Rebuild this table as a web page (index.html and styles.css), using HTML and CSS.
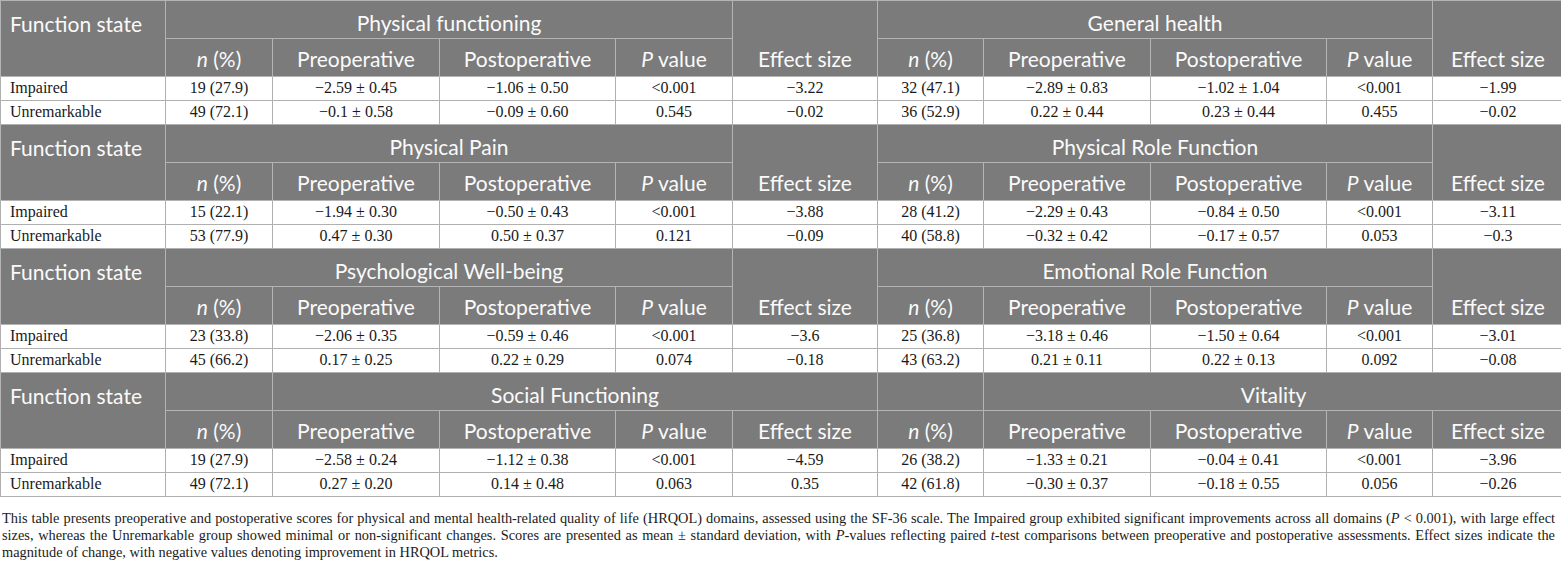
FILE: index.html
```html
<!DOCTYPE html>
<html lang="en">
<head>
    <meta charset="UTF-8">
    <title>HRQOL scores by function state</title>
    <link rel="stylesheet" href="styles.css">
</head>
<body>
    <table class="results">
        <colgroup>
            <col class="c-state">
            <col class="c-n">
            <col class="c-pre">
            <col class="c-post">
            <col class="c-p">
            <col class="c-eff">
            <col class="c-n2">
            <col class="c-pre">
            <col class="c-post">
            <col class="c-p2">
            <col class="c-eff2">
        </colgroup>
        <tbody>
            <!-- physical functioning / general health -->
            <tr class="h1">
                <th rowspan="2" class="state">Function state</th>
                <th colspan="4">Physical functioning</th>
                <th rowspan="2" class="eff">Effect size</th>
                <th colspan="4">General health</th>
                <th rowspan="2" class="eff">Effect size</th>
            </tr>
            <tr class="h2">
                <th><i>n</i> (%)</th><th>Preoperative</th><th>Postoperative</th><th><i>P</i> value</th>
                <th><i>n</i> (%)</th><th>Preoperative</th><th>Postoperative</th><th><i>P</i> value</th>
            </tr>
            <tr>
                <td class="name">Impaired</td><td>19 (27.9)</td><td>−2.59 ± 0.45</td><td>−1.06 ± 0.50</td><td>&lt;0.001</td><td>−3.22</td>
                <td>32 (47.1)</td><td>−2.89 ± 0.83</td><td>−1.02 ± 1.04</td><td>&lt;0.001</td><td>−1.99</td>
            </tr>
            <tr>
                <td class="name">Unremarkable</td><td>49 (72.1)</td><td>−0.1 ± 0.58</td><td>−0.09 ± 0.60</td><td>0.545</td><td>−0.02</td>
                <td>36 (52.9)</td><td>0.22 ± 0.44</td><td>0.23 ± 0.44</td><td>0.455</td><td>−0.02</td>
            </tr>

            <!-- physical pain / physical role -->
            <tr class="h1">
                <th rowspan="2" class="state">Function state</th>
                <th colspan="4">Physical Pain</th>
                <th rowspan="2" class="eff">Effect size</th>
                <th colspan="4">Physical Role Function</th>
                <th rowspan="2" class="eff">Effect size</th>
            </tr>
            <tr class="h2">
                <th><i>n</i> (%)</th><th>Preoperative</th><th>Postoperative</th><th><i>P</i> value</th>
                <th><i>n</i> (%)</th><th>Preoperative</th><th>Postoperative</th><th><i>P</i> value</th>
            </tr>
            <tr>
                <td class="name">Impaired</td><td>15 (22.1)</td><td>−1.94 ± 0.30</td><td>−0.50 ± 0.43</td><td>&lt;0.001</td><td>−3.88</td>
                <td>28 (41.2)</td><td>−2.29 ± 0.43</td><td>−0.84 ± 0.50</td><td>&lt;0.001</td><td>−3.11</td>
            </tr>
            <tr>
                <td class="name">Unremarkable</td><td>53 (77.9)</td><td>0.47 ± 0.30</td><td>0.50 ± 0.37</td><td>0.121</td><td>−0.09</td>
                <td>40 (58.8)</td><td>−0.32 ± 0.42</td><td>−0.17 ± 0.57</td><td>0.053</td><td>−0.3</td>
            </tr>

            <!-- psychological / emotional -->
            <tr class="h1">
                <th rowspan="2" class="state">Function state</th>
                <th colspan="4">Psychological Well-being</th>
                <th rowspan="2" class="eff">Effect size</th>
                <th colspan="4">Emotional Role Function</th>
                <th rowspan="2" class="eff">Effect size</th>
            </tr>
            <tr class="h2">
                <th><i>n</i> (%)</th><th>Preoperative</th><th>Postoperative</th><th><i>P</i> value</th>
                <th><i>n</i> (%)</th><th>Preoperative</th><th>Postoperative</th><th><i>P</i> value</th>
            </tr>
            <tr>
                <td class="name">Impaired</td><td>23 (33.8)</td><td>−2.06 ± 0.35</td><td>−0.59 ± 0.46</td><td>&lt;0.001</td><td>−3.6</td>
                <td>25 (36.8)</td><td>−3.18 ± 0.46</td><td>−1.50 ± 0.64</td><td>&lt;0.001</td><td>−3.01</td>
            </tr>
            <tr>
                <td class="name">Unremarkable</td><td>45 (66.2)</td><td>0.17 ± 0.25</td><td>0.22 ± 0.29</td><td>0.074</td><td>−0.18</td>
                <td>43 (63.2)</td><td>0.21 ± 0.11</td><td>0.22 ± 0.13</td><td>0.092</td><td>−0.08</td>
            </tr>

            <!-- social / vitality -->
            <tr class="h1">
                <th rowspan="2" class="state">Function state</th>
                <th></th>
                <th colspan="4">Social Functioning</th>
                <th></th>
                <th colspan="4">Vitality</th>
            </tr>
            <tr class="h2">
                <th><i>n</i> (%)</th><th>Preoperative</th><th>Postoperative</th><th><i>P</i> value</th><th>Effect size</th>
                <th><i>n</i> (%)</th><th>Preoperative</th><th>Postoperative</th><th><i>P</i> value</th><th>Effect size</th>
            </tr>
            <tr>
                <td class="name">Impaired</td><td>19 (27.9)</td><td>−2.58 ± 0.24</td><td>−1.12 ± 0.38</td><td>&lt;0.001</td><td>−4.59</td>
                <td>26 (38.2)</td><td>−1.33 ± 0.21</td><td>−0.04 ± 0.41</td><td>&lt;0.001</td><td>−3.96</td>
            </tr>
            <tr>
                <td class="name">Unremarkable</td><td>49 (72.1)</td><td>0.27 ± 0.20</td><td>0.14 ± 0.48</td><td>0.063</td><td>0.35</td>
                <td>42 (61.8)</td><td>−0.30 ± 0.37</td><td>−0.18 ± 0.55</td><td>0.056</td><td>−0.26</td>
            </tr>
        </tbody>
    </table>
    <p class="note">This table presents preoperative and postoperative scores for physical and mental health-related quality of life (HRQOL) domains, assessed using the SF-36 scale. The Impaired group exhibited significant improvements across all domains (<i>P</i>&nbsp;&lt;&nbsp;0.001), with large effect sizes, whereas the Unremarkable group showed minimal or non-significant changes. Scores are presented as mean&nbsp;±&nbsp;standard deviation, with <i>P</i>-values reflecting paired <i>t</i>-test comparisons between preoperative and postoperative assessments. Effect sizes indicate the magnitude of change, with negative values denoting improvement in HRQOL metrics.</p>
</body>
</html>
```

FILE: styles.css
```css
body{
    margin: 0;
    background-color: #fff;
}
table.results{
    width: 1561px;
    border-collapse: collapse;
    table-layout: fixed;
}
col.c-state{ width: 165px; }
col.c-n{ width: 107px; }
col.c-pre{ width: 167px; }
col.c-post{ width: 176px; }
col.c-p{ width: 117px; }
col.c-eff{ width: 145px; }
col.c-n2{ width: 106px; }
col.c-p2{ width: 106px; }
col.c-eff2{ width: 131px; }

table.results th{
    background-color: #7b7b7b;
    color: #fafafa;
    font-family: "Lato", "Open Sans", sans-serif;
    font-weight: normal;
    font-size: 21px;
    line-height: 25px;
    border: 1px solid #b4b4b4;
    padding: 0 5px 5px;
    vertical-align: bottom;
    text-align: center;
    white-space: nowrap;
}
table.results tr.h1 th{
    padding-bottom: 3px;
}
table.results tr.h1 th.eff{
    padding-bottom: 5px;
}
table.results tr.h1 th.state{
    text-align: left;
    vertical-align: top;
    padding: 10px 9px 0;
}
table.results tr.h1,
table.results tr.h2{
    height: 38px;
}
table.results td{
    font-family: "Liberation Serif", "Times New Roman", serif;
    font-size: 16px;
    line-height: 18px;
    color: #1a1a1a;
    text-align: center;
    border: 1px solid #b0b0b0;
    padding: 2px 6px 3px;
    height: 18px;
}
table.results td.name{
    text-align: left;
    padding-left: 9px;
}
p.note{
    font-family: "Liberation Serif", "Times New Roman", serif;
    font-size: 14.35px;
    line-height: 17px;
    color: #1a1a1a;
    text-align: justify;
    margin: 13px 6px 0 2px;
}
```
